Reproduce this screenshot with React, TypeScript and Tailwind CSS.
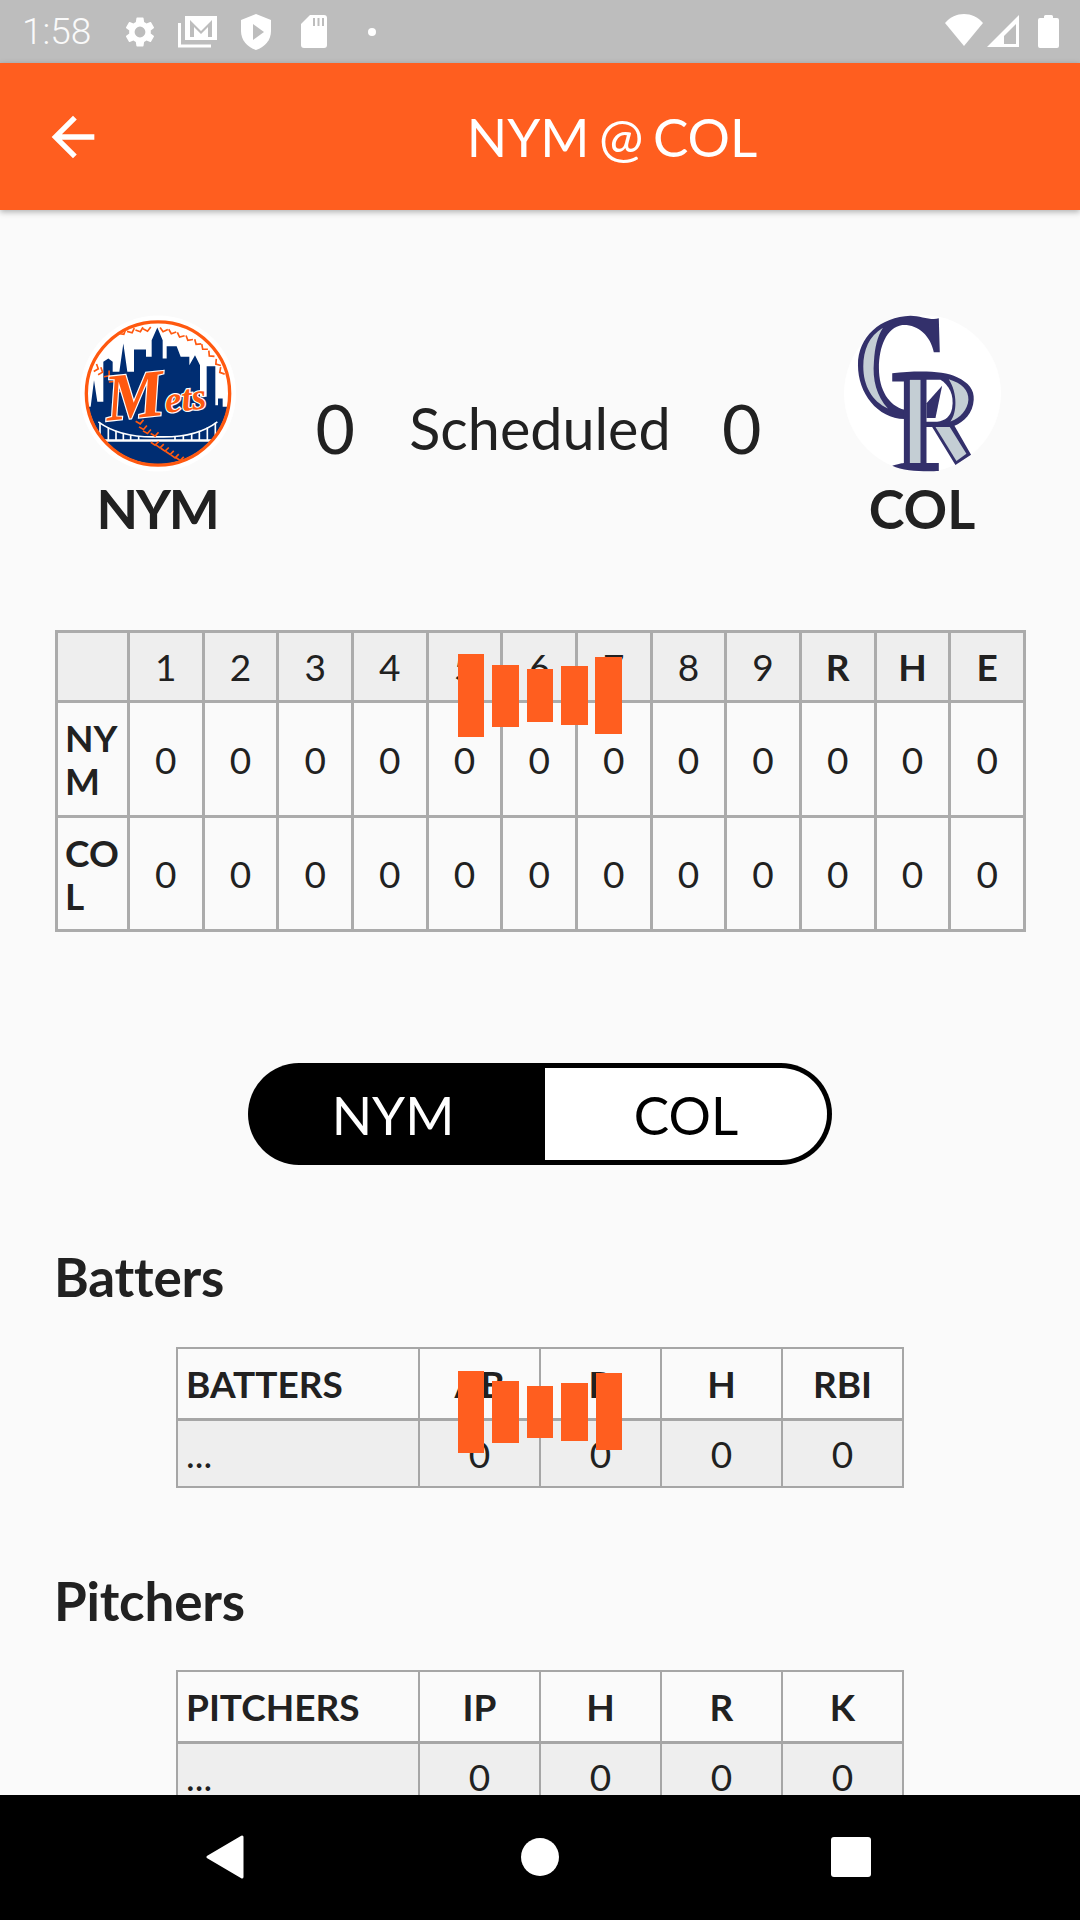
import React from "react";

const stitches: [number, number, number][] = [
  [190,100,-30],[215,95,-25],[240,92,-20],[262,90,-12],[310,92,15],[335,98,20],[360,108,25],[385,118,30],[410,130,35],[430,145,40],[450,165,45],[470,190,55],[482,215,60],
  [112,205,-70],[125,215,-70],[145,225,-50],[160,242,-45],[175,255,-45],[185,272,-35],
  [240,368,-10],[250,385,-10],[262,397,-10],[285,405,-10],
  [285,432,-5],[300,440,-5],[315,450,-5],[330,460,-5],[345,470,-5],[360,478,-5],
];

function MetsLogo() {
  return (
    <svg viewBox="60 45 468 470" className="w-[156px] h-[157px] block" aria-hidden>
      <defs>
        <clipPath id="metsClip"><circle cx="294" cy="280" r="212" /></clipPath>
      </defs>
      <circle cx="294" cy="280" r="234" fill="#ffffff" />
      <g clipPath="url(#metsClip)">
        <path fill="#002d72" d="M80 520V320H92L102 240L112 305H130V185L145 175L158 185V215H178L190 130L202 215H222V148H258V170H275V120L292 82L308 120V175H320V138H350L362 170H388V195L405 165L420 195V290H440V198H466V315H474V295H488V320H520V520Z" />
        <path fill="none" stroke="#ffffff" strokeWidth="5" d="M115 365C170 405 240 412 294 410C350 412 420 405 472 365" />
        <path fill="none" stroke="#ffffff" strokeWidth="8" d="M80 421H510" />
        <path fill="none" stroke="#ffffff" strokeWidth="5" d="M120 368V420M145 382V420M168 392V420M190 400V420M212 405V420M236 408V420M345 408V420M370 405V420M395 400V420M418 392V420M442 382V420M466 368V420" />
        {stitches.map(([x, y, r], i) => (
          <path
            key={i}
            d={`M${x - 12} ${y - 7}L${x} ${y + 3}L${x + 12} ${y - 7}`}
            fill="none"
            stroke="#ff5910"
            strokeWidth="5"
            transform={`rotate(${r} ${x} ${y})`}
          />
        ))}
      </g>
      <circle cx="294" cy="280" r="215" fill="none" stroke="#ff5910" strokeWidth="10" />
      <text
        transform="translate(142 362) rotate(-6)"
        fontFamily="'Liberation Serif', serif"
        fontWeight="700"
        fontStyle="italic"
        fill="#ff5910"
        stroke="#ffffff"
        strokeWidth="7"
        paintOrder="stroke"
      >
        <tspan fontSize="200">M</tspan>
        <tspan fontSize="112" dy="-6">ets</tspan>
      </text>
    </svg>
  );
}

function RockiesLogo() {
  return (
    <svg viewBox="70 45 472 472" className="w-[157px] h-[157px] block" aria-hidden>
      <circle cx="306" cy="281" r="236" fill="#ffffff" />
      <path fill="#33306b" d="M355 55L358 157H340C330 105 290 72 245 75C198 82 175 140 175 205C175 270 205 318 252 330V358C170 355 112 280 112 195C112 110 180 50 270 47C300 47 330 62 355 55Z" />
      <path fill="#c4ced4" d="M187 83C145 108 128 150 128 200C128 258 155 305 202 326C168 290 155 240 160 185C163 140 170 110 187 83Z" />
      <path fill="#33306b" d="M215 220C290 212 370 212 410 232C445 248 462 270 460 300C458 340 430 368 402 378L452 465L405 496L335 382H318V490H355V514C320 516 250 516 215 498C235 492 250 490 250 490V245H215Z" />
      <path fill="#c4ced4" d="M268 240H300V490H268Z" />
      <path fill="#c4ced4" d="M385 238C425 250 445 272 444 300C442 330 420 355 390 365C410 340 412 280 385 238Z" />
      <path fill="#c4ced4" d="M345 382H388L438 462L408 484Z" />
      <path fill="#ffffff" d="M318 240H360C385 255 402 285 395 325C390 350 375 362 350 366H318Z" />
      <path fill="#33306b" d="M365 258L345 355H318V310Z" />
    </svg>
  );
}

const bars1: [number, number, number, number][] = [
  [458, 654, 26, 83],
  [492, 665, 27, 62],
  [527, 669, 26, 53],
  [561, 666, 27, 59],
  [595, 657, 27, 77],
];
const bars2: [number, number, number, number][] = [
  [458, 1371, 26, 82],
  [492, 1381, 27, 62],
  [527, 1386, 26, 52],
  [561, 1383, 27, 58],
  [596, 1373, 26, 77],
];

function Bars() {
  return (
    <>
      {[...bars1, ...bars2].map(([x, y, w, h], i) => (
        <div key={i} className="absolute bg-[#ff5e1f]" style={{ left: x, top: y, width: w, height: h }} />
      ))}
    </>
  );
}

const lineCell = "border-[3px] border-[#ababab] text-center align-middle p-0";
const statCell = "border-2 border-[#a6a6a6] text-center align-middle p-0";

function LineScore() {
  const heads = ["1", "2", "3", "4", "5", "6", "7", "8", "9"];
  const rows = ["NYM", "COL"];
  return (
    <table className="w-[971px] table-fixed border-collapse text-[37px] leading-[43px] mt-[80px]">
      <colgroup>
        <col className="w-[72px]" />
        <col /><col /><col /><col /><col /><col /><col /><col /><col /><col /><col /><col />
      </colgroup>
      <tbody>
        <tr className="h-[70px] bg-[#eeeeee]">
          <td className={lineCell}></td>
          {heads.map((h) => (
            <td key={h} className={lineCell}>{h}</td>
          ))}
          {["R", "H", "E"].map((h) => (
            <td key={h} className={`${lineCell} font-bold`}>{h}</td>
          ))}
        </tr>
        {rows.map((r, idx) => (
          <tr key={r} className={idx === 0 ? "h-[115px]" : "h-[114px]"}>
            <td className={`${lineCell} !text-left font-bold break-all !pl-[7px]`}>{r}</td>
            {Array.from({ length: 12 }).map((_, i) => (
              <td key={i} className={lineCell}>0</td>
            ))}
          </tr>
        ))}
      </tbody>
    </table>
  );
}

function StatTable({ heads }: { heads: string[] }) {
  return (
    <table className="w-[728px] mx-auto table-fixed border-collapse text-[37px] leading-[43px]">
      <colgroup>
        <col className="w-[242px]" />
        <col /><col /><col /><col />
      </colgroup>
      <tbody>
        <tr className="h-[71px]">
          {heads.map((h, i) => (
            <td key={h} className={`${statCell} border-b-[3px] font-bold ${i === 0 ? "!text-left !px-[8px]" : ""}`}>{h}</td>
          ))}
        </tr>
        <tr className="h-[68px] bg-[#eeeeee]">
          <td className={`${statCell} !text-left !px-[8px]`}>...</td>
          <td className={statCell}>0</td>
          <td className={statCell}>0</td>
          <td className={statCell}>0</td>
          <td className={statCell}>0</td>
        </tr>
      </tbody>
    </table>
  );
}

export default function App() {
  return (
    <div className="relative w-[1080px] h-[1920px] overflow-hidden flex flex-col bg-[#fafafa] text-[#212121] font-['Lato',sans-serif]">
      {/* Status bar */}
      <div className="h-[63px] shrink-0 bg-[#bdbdbd] flex items-center text-white relative">
        <span className="ml-[22px] w-[72px] text-[37px] font-['Roboto',sans-serif] font-light text-[#fafafa]">1:58</span>
        <svg viewBox="0 0 24 24" className="w-[36px] h-[36px] ml-[28px]" fill="#fff">
          <path d="M19.14 12.94c.04-.3.06-.61.06-.94s-.02-.64-.07-.94l2.03-1.58a.5.5 0 0 0 .12-.64l-1.92-3.32a.5.5 0 0 0-.6-.22l-2.39.96c-.5-.38-1.03-.7-1.62-.94l-.36-2.54a.48.48 0 0 0-.48-.41h-3.84a.48.48 0 0 0-.47.41l-.36 2.54c-.59.24-1.13.57-1.62.94l-2.39-.96a.49.49 0 0 0-.59.22L2.72 8.84a.47.47 0 0 0 .12.64l2.03 1.58c-.05.3-.09.63-.09.94s.02.64.07.94l-2.03 1.58a.5.5 0 0 0-.12.64l1.92 3.32c.12.22.37.29.59.22l2.39-.96c.5.38 1.03.7 1.62.94l.36 2.54c.05.24.24.41.48.41h3.84c.24 0 .44-.17.47-.41l.36-2.54c.59-.24 1.13-.56 1.62-.94l2.39.96c.22.08.47 0 .59-.22l1.92-3.32a.47.47 0 0 0-.12-.64l-2.01-1.58zM12 15.6A3.6 3.6 0 1 1 12 8.4a3.6 3.6 0 0 1 0 7.2z" />
        </svg>
        <svg viewBox="0 0 39 33" className="w-[39px] h-[33px] ml-[20px]" fill="none">
          <path d="M7 1h32v24H7z" fill="#fff" />
          <path d="M1.5 8v23H33" stroke="#fff" strokeWidth="3" />
          <path d="M12 22V5l11 11L34 5v17h-4V12l-7 7-7-7v10z" fill="#bdbdbd" />
        </svg>
        <svg viewBox="0 0 30 36" className="w-[30px] h-[36px] ml-[24px]">
          <path d="M15 0L30 6V17C30 26 24 33 15 36C6 33 0 26 0 17V6Z" fill="#fff" />
          <path d="M12 10L23 18L12 26Z" fill="#bdbdbd" />
        </svg>
        <svg viewBox="0 0 26 33" className="w-[26px] h-[33px] ml-[30px]">
          <path d="M9 0H23Q26 0 26 3V30Q26 33 23 33H3Q0 33 0 30V9Z" fill="#fff" />
          <path d="M12 3h2v8h-2zM16.5 3h2v8h-2zM21 3h2v8h-2z" fill="#bdbdbd" />
        </svg>
        <div className="w-[8px] h-[8px] rounded-full bg-white ml-[41px]"></div>
        <svg viewBox="0 0 38 32" className="absolute left-[945px] top-[14px] w-[38px] h-[32px]">
          <path d="M0 9C5 3 12 0 19 0S33 3 38 9L19 32Z" fill="#fff" />
        </svg>
        <svg viewBox="0 0 32 32" className="absolute left-[987px] top-[15px] w-[32px] h-[32px]">
          <path d="M32 0V32H0Z" fill="#fff" />
          <path d="M29 9V29H17V21Z" fill="#bdbdbd" />
        </svg>
        <svg viewBox="0 0 21 33" className="absolute left-[1038px] top-[15px] w-[21px] h-[33px]">
          <path d="M6 3V1.5Q6 0 7.5 0H13.5Q15 0 15 1.5V3H19Q21 3 21 5V31Q21 33 19 33H2Q0 33 0 31V5Q0 3 2 3Z" fill="#fff" />
        </svg>
      </div>

      {/* App bar */}
      <div className="h-[147px] shrink-0 bg-[#ff5e1f] flex items-center text-white shadow-[0_2px_6px_rgba(0,0,0,0.3)] relative z-10">
        <div className="w-[144px] flex justify-start pl-[41px]">
          <svg viewBox="0 0 24 24" className="w-[64px] h-[64px]" fill="#fff">
            <path d="M20 11H7.83l5.59-5.59L12 4l-8 8 8 8 1.41-1.41L7.83 13H20v-2z" />
          </svg>
        </div>
        <div className="flex-1 text-center text-[53px] leading-none [word-spacing:-4px]">NYM @ COL</div>
      </div>

      {/* Content */}
      <div className="flex-1 min-h-0 overflow-hidden px-[55px] pt-[105px]">
        <div className="flex items-start h-[250px]">
          <div className="w-[206px] flex flex-col items-center">
            <MetsLogo />
            <div className="text-[54px] font-bold leading-none mt-[10px] tracking-[-2.2px] -ml-[2px]">NYM</div>
          </div>
          <div className="flex-1 flex justify-evenly items-center h-[226px]">
            <span className="text-[68px] leading-none">0</span>
            <span className="text-[57.5px] leading-none">Scheduled</span>
            <span className="text-[68px] leading-none -ml-[3px] mr-[3px]">0</span>
          </div>
          <div className="w-[206px] flex flex-col items-center">
            <RockiesLogo />
            <div className="text-[54px] font-bold leading-none mt-[10px]">COL</div>
          </div>
        </div>

        <div className="-mt-[15px]">
          <LineScore />
        </div>

        <div className="flex justify-center mt-[131px]">
          <div className="w-[584px] h-[102px] rounded-full bg-black p-[5px] flex text-[53px] leading-none">
            <div className="w-[292px] text-white flex items-center justify-center pr-[12px]">NYM</div>
            <div className="flex-1 flex items-center justify-center bg-white text-black rounded-r-full">COL</div>
          </div>
        </div>

        <h2 className="text-[53px] tracking-[-0.2px] font-bold leading-none mt-[85px] mb-[44px] -ml-px">Batters</h2>
        <StatTable heads={["BATTERS", "AB", "R", "H", "RBI"]} />

        <h2 className="text-[53px] tracking-[-0.2px] font-bold leading-none mt-[86px] mb-[43px] -ml-px">Pitchers</h2>
        <StatTable heads={["PITCHERS", "IP", "H", "R", "K"]} />
      </div>

      {/* Nav */}
      <div className="h-[125px] shrink-0 bg-black flex items-center relative z-10">
        <svg viewBox="0 0 38 44" className="absolute left-[206px] top-[40px] w-[38px] h-[44px]">
          <path d="M36 2V42L2 22Z" fill="#fff" stroke="#fff" strokeWidth="3" strokeLinejoin="round" />
        </svg>
        <div className="absolute left-[521px] top-[43px] w-[38px] h-[38px] rounded-full bg-white"></div>
        <div className="absolute left-[831px] top-[42px] w-[40px] h-[40px] rounded-[3px] bg-white"></div>
      </div>

      <Bars />
    </div>
  );
}
